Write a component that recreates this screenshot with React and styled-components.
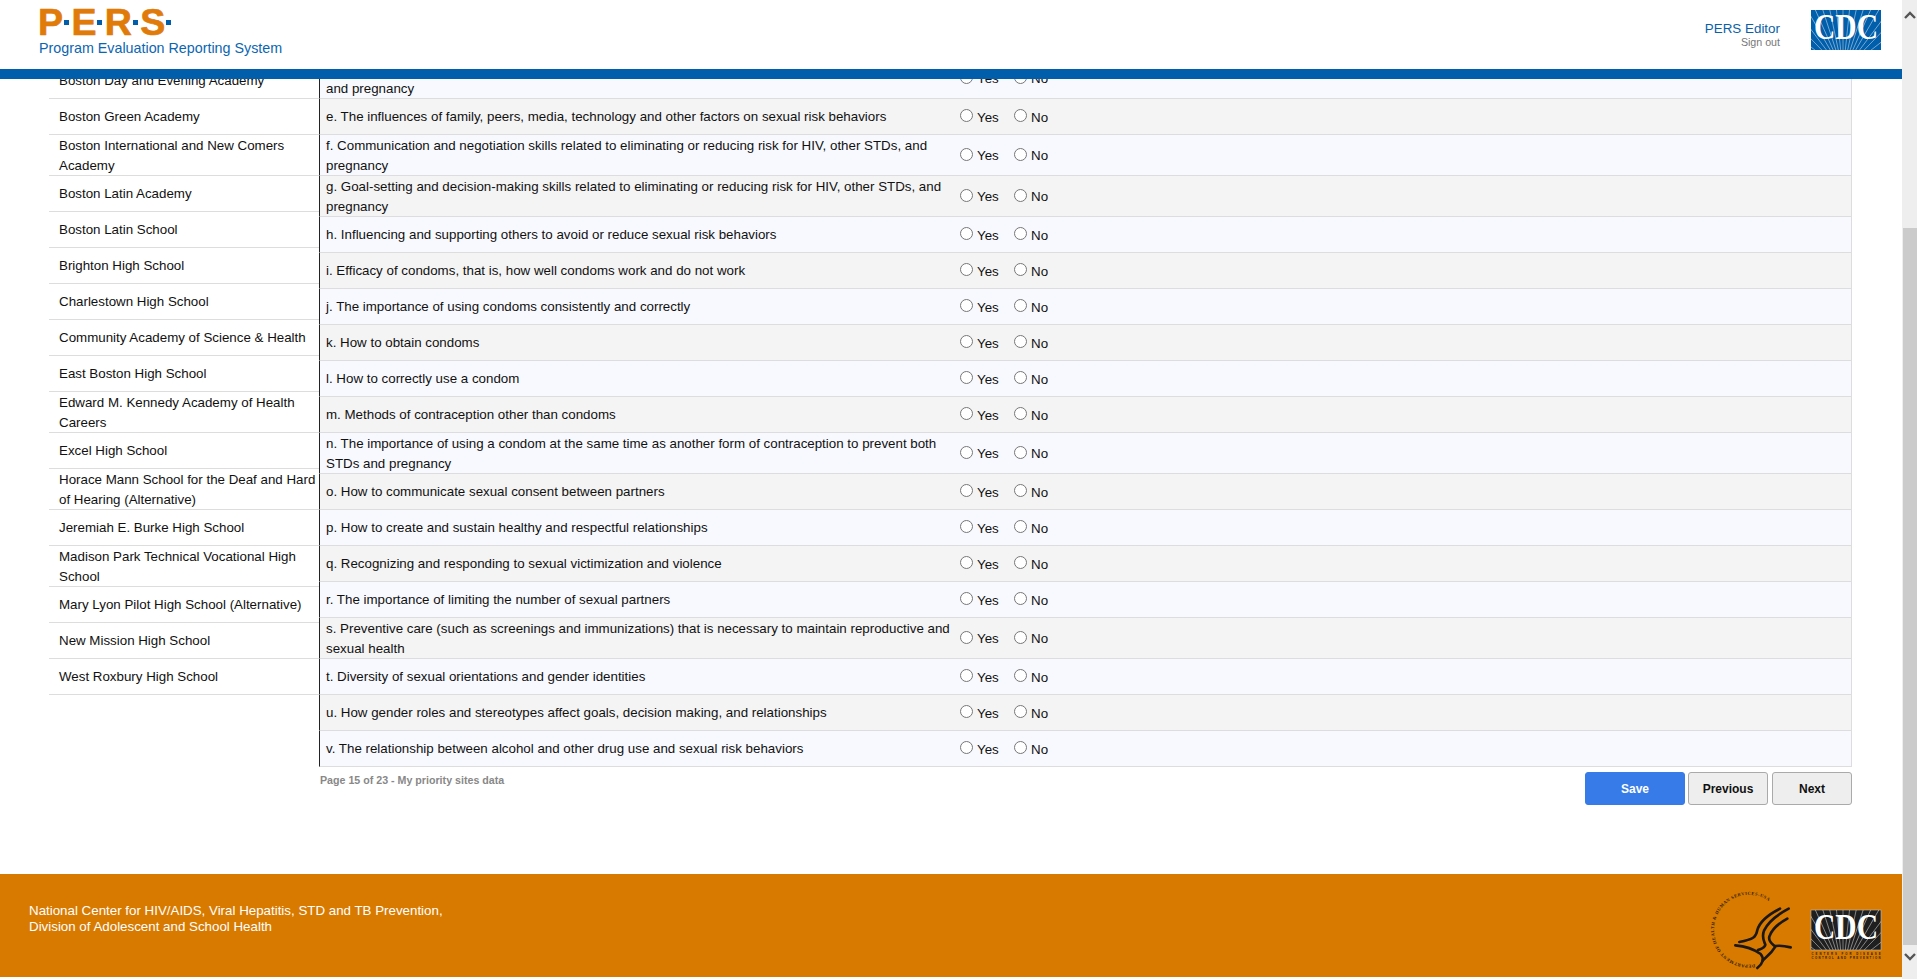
import React from "react";
import styled, { createGlobalStyle } from "styled-components";

const GlobalStyle = createGlobalStyle`
  html, body {
    margin: 0;
    padding: 0;
    height: 100%;
    overflow: hidden;
    background: #fff;
  }
  * { box-sizing: border-box; }
`;

const Viewport = styled.div`
  width: 1917px;
  height: 979px;
  display: flex;
  overflow: hidden;
  font-family: "Liberation Sans", Arial, sans-serif;
  color: #111;
`;

const Page = styled.div`
  position: relative;
  width: 1902px;
  height: 979px;
  overflow: hidden;
  display: flex;
  flex-direction: column;
`;

const Header = styled.header`
  position: absolute;
  top: 0;
  left: 0;
  right: 0;
  z-index: 5;
  height: 79px;
  background: #fff;
  border-bottom: 10px solid #005eaa;
  display: flex;
  align-items: flex-start;
  justify-content: space-between;
  padding: 0 21px 0 38px;
`;

const Brand = styled.div`
  display: flex;
  flex-direction: column;
`;

const BrandMark = styled.div`
  display: flex;
  align-items: center;
  height: 30px;
  margin-top: 7px;
  font-size: 37.5px;
  line-height: 30px;
  font-weight: 700;
  color: #e07b0a;
  -webkit-text-stroke: 0.7px #e07b0a;
  white-space: nowrap;
`;

const BrandDot = styled.span`
  width: 5px;
  height: 5px;
  background: #005eaa;
  margin: 0 2.4px 0 1px;
  flex: none;
`;

const BrandName = styled.div`
  font-size: 14.3px;
  line-height: 18px;
  margin-top: 2px;
  margin-left: 1px;
  color: #0b66b2;
  white-space: nowrap;
`;

const HeaderRight = styled.div`
  display: flex;
  align-items: flex-start;
  gap: 31px;
  padding-top: 10px;
`;

const UserBox = styled.div`
  display: flex;
  flex-direction: column;
  align-items: flex-end;
  padding-top: 11px;
`;

const UserName = styled.div`
  font-size: 13.4px;
  line-height: 15px;
  color: #0b5fa8;
`;

const SignOut = styled.a`
  font-size: 10.67px;
  line-height: 13px;
  color: #777;
`;

const Main = styled.main`
  flex: none;
  height: 874px;
  padding: 58px 50px 0 49px;
  display: flex;
  flex-direction: column;
`;

const Columns = styled.div`
  display: flex;
  align-items: flex-start;
`;

const SiteList = styled.div`
  width: 270px;
  flex: none;
  padding-top: 5px;
`;

const SiteRow = styled.div`
  height: ${(p) => (p.$tall ? 41 : 36)}px;
  padding: ${(p) => (p.$tall ? 2 : 0)}px 2px 0 10px;
  display: flex;
  align-items: center;
  border-bottom: 1px solid #ddd;
  font-size: 13.33px;
  line-height: 20px;
`;

const Questions = styled.div`
  width: 1533px;
  flex: none;
  border-right: 1px solid #ddd;
`;

const QuestionRow = styled.div`
  height: ${(p) => (p.$tall ? 41 : 36)}px;
  display: flex;
  align-items: center;
  padding-left: 6px;
  background: ${(p) => (p.$alt ? "#f4f4f4" : "#f8f9fe")};
  border-left: 1px solid #222;
  border-bottom: 1px solid #ddd;
  font-size: 13.33px;
  line-height: 20px;
`;

const QuestionText = styled.div`
  width: 634px;
  flex: none;
  padding-top: ${(p) => (p.$tall ? 2 : 0)}px;
`;

const Choice = styled.label`
  display: flex;
  align-items: center;
  width: ${(p) => p.$w}px;
  padding-top: 2px;
  flex: none;
`;

const Radio = styled.input.attrs({ type: "radio" })`
  width: 13px;
  height: 13px;
  margin: 0 4px 4px 0;
  flex: none;
`;

const FooterBar = styled.div`
  display: flex;
  justify-content: space-between;
  align-items: flex-start;
  padding: 5px 0 0 270px;
`;

const PageNote = styled.div`
  font-size: 10.67px;
  line-height: 14px;
  font-weight: 700;
  color: #888;
  padding: 1px 0 0 1px;
`;

const Buttons = styled.div`
  display: flex;
  gap: 4px;
`;

const Button = styled.button`
  width: ${(p) => p.$w}px;
  height: 33px;
  margin-right: ${(p) => (p.$primary ? -1 : 0)}px;
  border-radius: 3px;
  font-family: inherit;
  font-size: 12px;
  font-weight: 700;
  padding: 0;
  color: ${(p) => (p.$primary ? "#fff" : "#111")};
  background: ${(p) => (p.$primary ? "#377be8" : "#eee")};
  border: 1px solid ${(p) => (p.$primary ? "#377be8" : "#aaa")};
`;

const PageFooter = styled.footer`
  height: 103px;
  background: #d97a00;
  display: flex;
  align-items: center;
  justify-content: space-between;
  padding: 0 21px 0 29px;
`;

const FooterText = styled.div`
  color: #fff;
  font-size: 13.33px;
  line-height: 16px;
  margin-top: -13px;
`;

const FooterLogos = styled.div`
  align-self: stretch;
  display: flex;
  align-items: flex-start;
  gap: 11px;
  padding-top: 6px;
`;

const FooterCdc = styled.div`
  margin-top: 30px;
`;

const ScrollTrack = styled.div`
  width: 15px;
  height: 979px;
  flex: none;
  background: #eee;
  display: flex;
  flex-direction: column;
`;

const ScrollArrow = styled.div`
  height: ${(p) => p.$h}px;
  flex: none;
  display: flex;
  align-items: ${(p) => (p.$up ? "center" : "flex-start")};
  padding-top: ${(p) => (p.$up ? 0 : 8)}px;
  justify-content: center;
`;

const ScrollThumb = styled.div`
  margin: auto 0 0 1px;
  height: 717px;
  background: #cbcbcb;
`;

const sites = [
  ["Boston Day and Evening Academy"],
  ["Boston Green Academy"],
  ["Boston International and New Comers Academy", true],
  ["Boston Latin Academy"],
  ["Boston Latin School"],
  ["Brighton High School"],
  ["Charlestown High School"],
  ["Community Academy of Science & Health"],
  ["East Boston High School"],
  ["Edward M. Kennedy Academy of Health Careers", true],
  ["Excel High School"],
  ["Horace Mann School for the Deaf and Hard of Hearing (Alternative)", true],
  ["Jeremiah E. Burke High School"],
  ["Madison Park Technical Vocational High School", true],
  ["Mary Lyon Pilot High School (Alternative)"],
  ["New Mission High School"],
  ["West Roxbury High School"],
];

const questions = [
  ["d. The benefits of being sexually abstinent and how to eliminate or reduce the risk for HIV and other STDs, and pregnancy", true],
  ["e. The influences of family, peers, media, technology and other factors on sexual risk behaviors"],
  ["f. Communication and negotiation skills related to eliminating or reducing risk for HIV, other STDs, and pregnancy", true],
  ["g. Goal-setting and decision-making skills related to eliminating or reducing risk for HIV, other STDs, and pregnancy", true],
  ["h. Influencing and supporting others to avoid or reduce sexual risk behaviors"],
  ["i. Efficacy of condoms, that is, how well condoms work and do not work"],
  ["j. The importance of using condoms consistently and correctly"],
  ["k. How to obtain condoms"],
  ["l. How to correctly use a condom"],
  ["m. Methods of contraception other than condoms"],
  ["n. The importance of using a condom at the same time as another form of contraception to prevent both STDs and pregnancy", true],
  ["o. How to communicate sexual consent between partners"],
  ["p. How to create and sustain healthy and respectful relationships"],
  ["q. Recognizing and responding to sexual victimization and violence"],
  ["r. The importance of limiting the number of sexual partners"],
  ["s. Preventive care (such as screenings and immunizations) that is necessary to maintain reproductive and sexual health", true],
  ["t. Diversity of sexual orientations and gender identities"],
  ["u. How gender roles and stereotypes affect goals, decision making, and relationships"],
  ["v. The relationship between alcohol and other drug use and sexual risk behaviors"],
];

// fan of thin lines behind the CDC letters
const rayAngles = [-52, -44, -37, -30, -24, -18, -12, -6, 0, 6, 12, 18, 24, 30, 37, 44, 52];

function CdcLogo({ bg, footer }) {
  return (
    <svg width="70" height={footer ? 50 : 40} viewBox={`0 0 70 ${footer ? 50 : 40}`} overflow="visible">
      <defs>
        <clipPath id="cdcBox">
          <rect width="70" height="40" />
        </clipPath>
      </defs>
      <rect width="70" height="40" fill={bg} stroke={footer ? "#bbb" : "none"} strokeWidth="0.6" />
      <g clipPath="url(#cdcBox)">
        {rayAngles.map((a) => (
          <line key={a} x1="32" y1="62" x2="32" y2="-50" stroke="#fff" strokeWidth="0.6" opacity="0.7" transform={`rotate(${a} 32 62)`} />
        ))}
      </g>
      <text x="35" y="28.5" textAnchor="middle" fontFamily="Liberation Serif, serif" fontWeight="700" fontSize="35" fill="#fff" textLength="64" lengthAdjust="spacingAndGlyphs">
        CDC
      </text>
      {footer && (
        <>
          <text x="35" y="45" textAnchor="middle" fontFamily="Liberation Sans, sans-serif" fontWeight="700" fontSize="2.8" fill="#2a1a08" textLength="69">
            CENTERS FOR DISEASE
          </text>
          <text x="35" y="49" textAnchor="middle" fontFamily="Liberation Sans, sans-serif" fontWeight="700" fontSize="2.8" fill="#2a1a08" textLength="69">
            CONTROL AND PREVENTION
          </text>
        </>
      )}
    </svg>
  );
}

function HhsLogo() {
  return (
    <svg width="100" height="97" viewBox="0 0 300 291">
      <defs>
        <path id="hhsRing" d="M165 253A105 105 0 1 1 235 92" fill="none" />
      </defs>
      <text fontFamily="Liberation Serif, serif" fontSize="13.5" fontWeight="700" fill="#2a1a08">
        <textPath href="#hhsRing" textLength="410">DEPARTMENT OF HEALTH &amp; HUMAN SERVICES-USA</textPath>
      </text>
      <g fill="none" stroke="#1b1712" strokeLinecap="round" strokeLinejoin="round" strokeWidth="8">
        <path d="M240 86C208 102 180 122 172 150C168 172 160 178 118 186" />
        <path d="M266 86C232 104 204 126 192 152C184 172 192 182 196 194C194 204 184 206 174 210" />
        <path d="M262 116C236 130 216 146 208 170C204 186 218 192 226 200C212 224 196 232 188 242" />
        <path d="M272 202C256 198 240 196 226 198" />
        <path d="M106 196C132 198 160 206 182 222C194 236 188 252 172 264" />
      </g>
    </svg>
  );
}

function Chevron({ up }) {
  return (
    <svg width="12" height="8" viewBox="0 0 12 8">
      <path d={up ? "M1 7L6 2L11 7" : "M1 1L6 6L11 1"} fill="none" stroke="#555" strokeWidth="2.4" />
    </svg>
  );
}

export default function App() {
  return (
    <>
      <GlobalStyle />
      <Viewport>
        <Page>
          <Header>
            <Brand>
              <BrandMark>
                P<BrandDot />E<BrandDot />R<BrandDot />S<BrandDot />
              </BrandMark>
              <BrandName>Program Evaluation Reporting System</BrandName>
            </Brand>
            <HeaderRight>
              <UserBox>
                <UserName>PERS Editor</UserName>
                <SignOut>Sign out</SignOut>
              </UserBox>
              <CdcLogo bg="#005eaa" />
            </HeaderRight>
          </Header>
          <Main>
            <Columns>
              <SiteList>
                {sites.map(([name, tall]) => (
                  <SiteRow key={name} $tall={tall}>{name}</SiteRow>
                ))}
              </SiteList>
              <Questions>
                {questions.map(([text, tall], i) => (
                  <QuestionRow key={text} $tall={tall} $alt={i % 2 === 1}>
                    <QuestionText $tall={tall}>{text}</QuestionText>
                    <Choice $w={54}>
                      <Radio name={text} />
                      Yes
                    </Choice>
                    <Choice $w={40}>
                      <Radio name={text} />
                      No
                    </Choice>
                  </QuestionRow>
                ))}
              </Questions>
            </Columns>
            <FooterBar>
              <PageNote>Page 15 of 23 - My priority sites data</PageNote>
              <Buttons>
                <Button $primary $w={100}>Save</Button>
                <Button $w={80}>Previous</Button>
                <Button $w={80}>Next</Button>
              </Buttons>
            </FooterBar>
          </Main>
          <PageFooter>
            <FooterText>
              National Center for HIV/AIDS, Viral Hepatitis, STD and TB Prevention,
              <br />
              Division of Adolescent and School Health
            </FooterText>
            <FooterLogos>
              <HhsLogo />
              <FooterCdc>
                <CdcLogo bg="#1f1f1f" footer />
              </FooterCdc>
            </FooterLogos>
          </PageFooter>
        </Page>
        <ScrollTrack>
          <ScrollArrow $h={30} $up><Chevron up /></ScrollArrow>
          <ScrollThumb />
          <ScrollArrow $h={34}><Chevron /></ScrollArrow>
        </ScrollTrack>
      </Viewport>
    </>
  );
}
